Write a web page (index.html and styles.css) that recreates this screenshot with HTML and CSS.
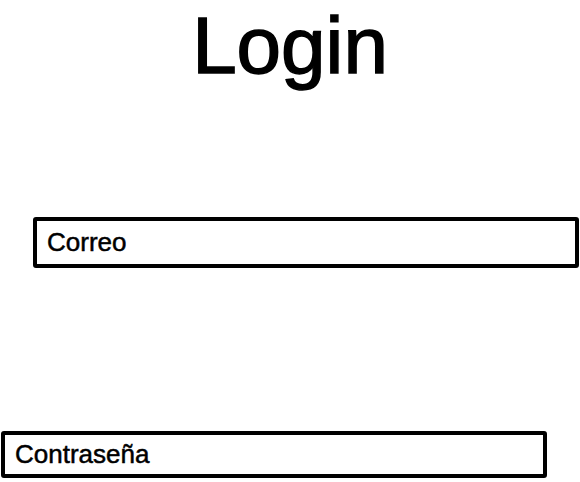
FILE: index.html
```html
<!DOCTYPE html>
<html lang="es">
<head>
    <meta charset="UTF-8">
    <meta name="viewport" content="width=device-width, initial-scale=1.0">
    <title>Login</title>
    <link rel="stylesheet" href="styles.css">
</head>
<body>
    <h1>Login</h1>
    <div class="field field-email">Correo</div>
    <div class="field field-password">Contraseña</div>
</body>
</html>
```

FILE: styles.css
```css
body {
    margin: 0;
    font-family: "Liberation Sans", Arial, sans-serif;
    color: #000;
    background: #fff;
}
h1 {
    margin: 0;
    font-size: 80px;
    line-height: normal;
    font-weight: normal;
    text-align: center;
    -webkit-text-stroke: 1.5px #000;
}
.field {
    box-sizing: border-box;
    width: 546px;
    display: flex;
    align-items: center;
    padding-left: 10px;
    border: 4px solid #000;
    border-radius: 3px;
    font-size: 26px;
    -webkit-text-stroke: 0.5px #000;
}
.field-email {
    margin: 125px 0 0 33px;
    height: 51px;
}
.field-password {
    margin: 163px 0 0 1px;
    height: 47px;
}
```
